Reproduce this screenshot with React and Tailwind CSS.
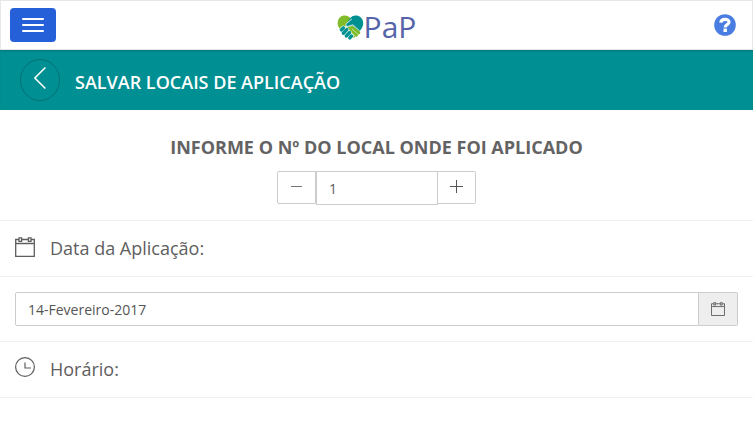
import { useState } from "react";

function HandshakeHeart() {
  return (
    <svg viewBox="0 0 78 74" className="h-[25px] w-[27px]" aria-hidden="true">
      {/* Heart halves */}
      <path
        d="M39 10C32 0 17 -1 9 6C-2 16 -1 32 8 42L22 36L38 19L46 12Z"
        fill="#80bc28"
      />
      <path
        d="M36 12C44 0 60 -1 69 7C80 18 78 32 70 43L63 50L46 31L33 35C26 35 22 30 28 24Z"
        fill="#00908f"
      />
      {/* Green forearm and fingers */}
      <path
        d="M26 37L45 32L67 49C70 54 66 59 61 57C62 63 58 66 53 63C52 68 47 69 42 65L22 43Z"
        fill="#80bc28"
      />
      <path d="M43 41L60 56M35 46L52 62" stroke="#ffffff" strokeWidth="1.6" />
      {/* Teal fingers */}
      <g stroke="#ffffff" strokeWidth="13" strokeLinecap="round">
        <path d="M12 44L18 38M18 54L28 43M27 62L36 52M37 68L42 62" />
      </g>
      <g stroke="#00908f" strokeWidth="10" strokeLinecap="round">
        <path d="M12 44L18 38M18 54L28 43M27 62L36 52M37 68L42 62" />
      </g>
      <path
        d="M43 12L27 25C23 31 27 36 34 33L46 29L66 47"
        fill="none"
        stroke="#ffffff"
        strokeWidth="2.4"
      />
    </svg>
  );
}

function CalendarIcon({ className }) {
  return (
    <svg
      viewBox="0 0 20 20"
      className={className}
      fill="none"
      stroke="currentColor"
      strokeWidth="1.3"
      aria-hidden="true"
    >
      <path d="M4 2.5H0.7V19.3H19.3V2.5H16M6.6 2.5H13.4M0.7 6.5H19.3" />
      <path d="M4 0.9H6.6V4.4H4ZM13.4 0.9H16V4.4H13.4Z" />
    </svg>
  );
}

function ClockIcon({ className }) {
  return (
    <svg
      viewBox="0 0 20 20"
      className={className}
      fill="none"
      stroke="currentColor"
      strokeWidth="1.2"
      aria-hidden="true"
    >
      <circle cx="10" cy="10" r="9.4" />
      <path d="M10 5.5V11H16" />
    </svg>
  );
}

export default function App() {
  const [place, setPlace] = useState(1); // Application site number
  const [date, setDate] = useState("14-Fevereiro-2017");

  return (
    <div className="min-h-screen bg-white font-['Open_Sans',sans-serif] text-[#5e5e5e]">
      {/* Top bar */}
      <header className="flex h-[50px] items-center justify-between border border-[#e7e7e7] px-[9px]">
        <button
          type="button"
          aria-label="Menu"
          className="flex h-[34px] w-[46px] flex-col items-center justify-center gap-1 rounded bg-[#2560d8]"
        >
          <span className="h-0.5 w-[22px] rounded-[1px] bg-white" />
          <span className="h-0.5 w-[22px] rounded-[1px] bg-white" />
          <span className="h-0.5 w-[22px] rounded-[1px] bg-white" />
        </button>
        <a href="#" className="flex items-center pt-1">
          <HandshakeHeart />
          <span className="text-[30px] leading-6 font-medium text-[#5563ab]">PaP</span>
        </a>
        <button
          type="button"
          aria-label="Ajuda"
          className="flex w-[46px] justify-end pr-[7px]"
        >
          <svg viewBox="0 0 22 22" className="size-[22px]" aria-hidden="true">
            <circle cx="11" cy="11" r="10.8" fill="#4a7de2" />
            <path
              d="M6.8 8.6C7.2 4.3 15 4.3 15 8.2C15 10.8 11.2 10.6 11.2 13.4"
              fill="none"
              stroke="#ffffff"
              strokeWidth="3.2"
            />
            <path d="M9.5 14.6H12.9V18H9.5Z" fill="#ffffff" />
          </svg>
        </button>
      </header>

      {/* Page title */}
      <div className="flex h-[60px] items-center bg-[#008f92] px-5 shadow-[inset_0_2px_2px_-1px_#00777a]">
        <button
          type="button"
          aria-label="Voltar"
          className="flex h-[42px] w-10 items-center justify-center rounded-[50%] border border-[#007477] pb-1"
        >
          <svg
            viewBox="0 0 12 22"
            className="h-[22px] w-3"
            fill="none"
            stroke="#ffffff"
            strokeWidth="1.5"
            aria-hidden="true"
          >
            <path d="M11.4 0.5L0.9 11L11.4 21.5" />
          </svg>
        </button>
        <h1 className="pt-1 pl-[15px] text-lg font-semibold text-white">
          SALVAR LOCAIS DE APLICAÇÃO
        </h1>
      </div>

      <main>
        {/* Number of the site */}
        <section className="flex flex-col items-center border-b border-[#f0f0f0] pt-6 pb-[15px]">
          <label htmlFor="place" className="text-lg leading-[26px] font-bold text-[#636363]">
            INFORME O Nº DO LOCAL ONDE FOI APLICADO
          </label>
          <div className="mt-[11px] flex items-start">
            <button
              type="button"
              aria-label="Diminuir"
              onClick={() => setPlace(Math.max(1, place - 1))}
              className="flex h-[33px] w-[39px] items-center justify-center rounded-l-xs border border-[#cccccc] pb-0.5"
            >
              <span className="h-px w-[11px] bg-[#777777]" />
            </button>
            <input
              id="place"
              type="text"
              inputMode="numeric"
              value={place}
              onChange={(e) => setPlace(Number(e.target.value) || 1)}
              className="h-[34px] w-[122px] border border-[#cccccc] px-3 text-sm"
            />
            <button
              type="button"
              aria-label="Aumentar"
              onClick={() => setPlace(place + 1)}
              className="flex h-[33px] w-[38px] items-center justify-center rounded-r-xs border border-l-0 border-[#cccccc] pb-0.5"
            >
              <svg viewBox="0 0 13 13" className="size-[13px]" aria-hidden="true">
                <path d="M6.5 0V13M0 6.5H13" stroke="#555555" />
              </svg>
            </button>
          </div>
        </section>

        {/* Date */}
        <div className="flex h-14 items-center border-b border-[#f0f0f0] px-[15px] pb-0.5">
          <CalendarIcon className="mb-0.5 size-5" />
          <label htmlFor="date" className="pl-[15px] text-lg">
            Data da Aplicação:
          </label>
        </div>
        <div className="flex border-b border-[#f0f0f0] p-[15px]">
          <input
            id="date"
            type="text"
            value={date}
            onChange={(e) => setDate(e.target.value)}
            className="h-[34px] min-w-0 flex-1 rounded-l-xs border border-[#cccccc] px-3 text-sm text-[#555555]"
          />
          <button
            type="button"
            aria-label="Abrir calendário"
            className="flex h-[34px] w-[39px] items-center justify-center rounded-r-xs border border-l-0 border-[#cccccc] bg-[#eeeeee]"
          >
            <CalendarIcon className="size-3.5" />
          </button>
        </div>

        {/* Time */}
        <div className="flex h-14 items-center border-b border-[#f0f0f0] px-[15px] pb-0.5">
          <ClockIcon className="mb-1 size-5" />
          <h2 className="pl-[15px] text-lg">Horário:</h2>
        </div>
      </main>
    </div>
  );
}
